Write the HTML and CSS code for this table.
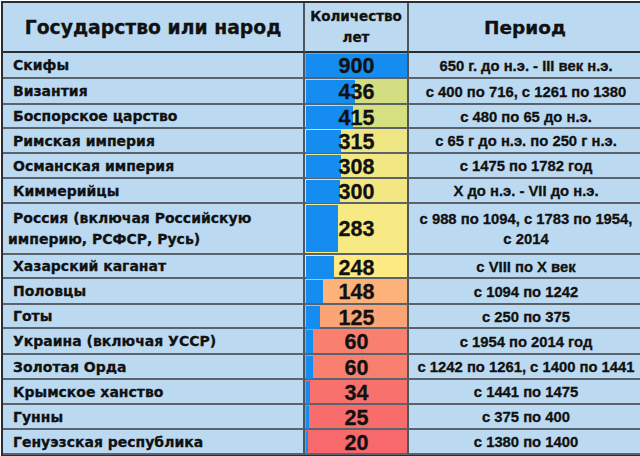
FILE: index.html
```html
<!DOCTYPE html>
<html lang="ru">
<head>
<meta charset="utf-8">
<title>Государство или народ</title>
<link rel="stylesheet" href="styles.css">
</head>
<body>
<div class="sheet">
  <div class="cell head name-head">Государство или народ</div>
  <div class="cell head years-head">Количество<br>лет</div>
  <div class="cell head period-head">Период</div>

  <div class="cell name">Скифы</div>
  <div class="cell years" style="background:#63be7b"><span class="bar" style="width:100%"></span><span class="num">900</span></div>
  <div class="cell period">650 г. до н.э. - III век н.э.</div>

  <div class="cell name">Византия</div>
  <div class="cell years" style="background:#d2de81"><span class="bar" style="width:48.4%"></span><span class="num">436</span></div>
  <div class="cell period">с 400 по 716, с 1261 по 1380</div>

  <div class="cell name">Боспорское царство</div>
  <div class="cell years" style="background:#d7e081"><span class="bar" style="width:46.1%"></span><span class="num">415</span></div>
  <div class="cell period">с 480 по 65 до н.э.</div>

  <div class="cell name">Римская империя</div>
  <div class="cell years" style="background:#efe683"><span class="bar" style="width:35%"></span><span class="num">315</span></div>
  <div class="cell period">с 65 г до н.э. по 250 г н.э.</div>

  <div class="cell name">Османская империя</div>
  <div class="cell years" style="background:#f1e783"><span class="bar" style="width:34.2%"></span><span class="num">308</span></div>
  <div class="cell period">с 1475 по 1782 год</div>

  <div class="cell name">Киммерийцы</div>
  <div class="cell years" style="background:#f3e783"><span class="bar" style="width:33.3%"></span><span class="num">300</span></div>
  <div class="cell period">X до н.э. - VII до н.э.</div>

  <div class="cell name">Россия (включая Российскую<br>империю, РСФСР, Русь)</div>
  <div class="cell years" style="background:#f7e984"><span class="bar" style="width:31.4%"></span><span class="num">283</span></div>
  <div class="cell period">с 988 по 1094, с 1783 по 1954,<br>с 2014</div>

  <div class="cell name">Хазарский каганат</div>
  <div class="cell years" style="background:#ffeb84"><span class="bar" style="width:27.6%"></span><span class="num">248</span></div>
  <div class="cell period">с VIII по X век</div>

  <div class="cell name">Половцы</div>
  <div class="cell years" style="background:#fcb279"><span class="bar" style="width:16.4%"></span><span class="num">148</span></div>
  <div class="cell period">с 1094 по 1242</div>

  <div class="cell name">Готы</div>
  <div class="cell years" style="background:#fba576"><span class="bar" style="width:13.9%"></span><span class="num">125</span></div>
  <div class="cell period">с 250 по 375</div>

  <div class="cell name">Украина (включая УССР)</div>
  <div class="cell years" style="background:#f9806f"><span class="bar" style="width:6.7%"></span><span class="num">60</span></div>
  <div class="cell period">с 1954 по 2014 год</div>

  <div class="cell name">Золотая Орда</div>
  <div class="cell years" style="background:#f9806f"><span class="bar" style="width:6.7%"></span><span class="num">60</span></div>
  <div class="cell period">с 1242 по 1261, с 1400 по 1441</div>

  <div class="cell name">Крымское ханство</div>
  <div class="cell years" style="background:#f8716d"><span class="bar" style="width:3.8%"></span><span class="num">34</span></div>
  <div class="cell period">с 1441 по 1475</div>

  <div class="cell name">Гунны</div>
  <div class="cell years" style="background:#f86c6c"><span class="bar" style="width:2.8%"></span><span class="num">25</span></div>
  <div class="cell period">с 375 по 400</div>

  <div class="cell name">Генуэзская республика</div>
  <div class="cell years" style="background:#f8696b"><span class="bar" style="width:2.2%"></span><span class="num">20</span></div>
  <div class="cell period">с 1380 по 1400</div>
</div>
</body>
</html>
```

FILE: styles.css
```css
* { box-sizing: border-box; }

html, body {
  margin: 0;
  padding: 0;
  background: #ffffff;
}

body {
  padding: 1px 0 0 1px;
  overflow: hidden;
  font-family: "Liberation Sans", Arial, sans-serif;
  font-weight: bold;
  color: #111111;
  -webkit-text-stroke: 0.3px #111111;
}

.sheet {
  display: grid;
  width: 644px;
  grid-template-columns: 302px 104px 234px;
  grid-template-rows: 50px 26px 26px 24px 25px 25px 25px 51px 24px 26px 24px 26px 25px 25px 25px 25px;
  border: 2px solid #2a2e33;
  background: #bbd9f0;
}

.cell {
  display: flex;
  align-items: center;
  border-right: 2px solid #4d555d;
  border-bottom: 2px solid #5a636c;
  min-width: 0;
}

.head {
  justify-content: center;
  text-align: center;
  font-family: "DejaVu Sans", Verdana, sans-serif;
  border-bottom: 2px solid #2a2e33;
}

.name-head { font-size: 18.8px; padding-top: 1px; }
.years-head { font-size: 13.5px; line-height: 21px; }
.period-head { font-size: 18.5px; padding-top: 1px; }

.name {
  font-family: "DejaVu Sans", Verdana, sans-serif;
  font-size: 14px;
  line-height: 21px;
  padding-left: 5px;
  text-indent: 5px;
  padding-top: 1px;
}

.years {
  display: grid;
  padding: 1px 0 1px 1px;
}

.years > * {
  grid-area: 1 / 1;
}

.bar {
  display: block;
  background: #148cf0;
  height: 100%;
}

.num {
  align-self: center;
  justify-self: center;
  font-size: 21.5px;
  line-height: 22px;
  padding-top: 1px;
}

.period {
  justify-content: center;
  text-align: center;
  font-size: 14.8px;
  line-height: 20px;
  padding-top: 1px;
  border-right: none;
}
```
